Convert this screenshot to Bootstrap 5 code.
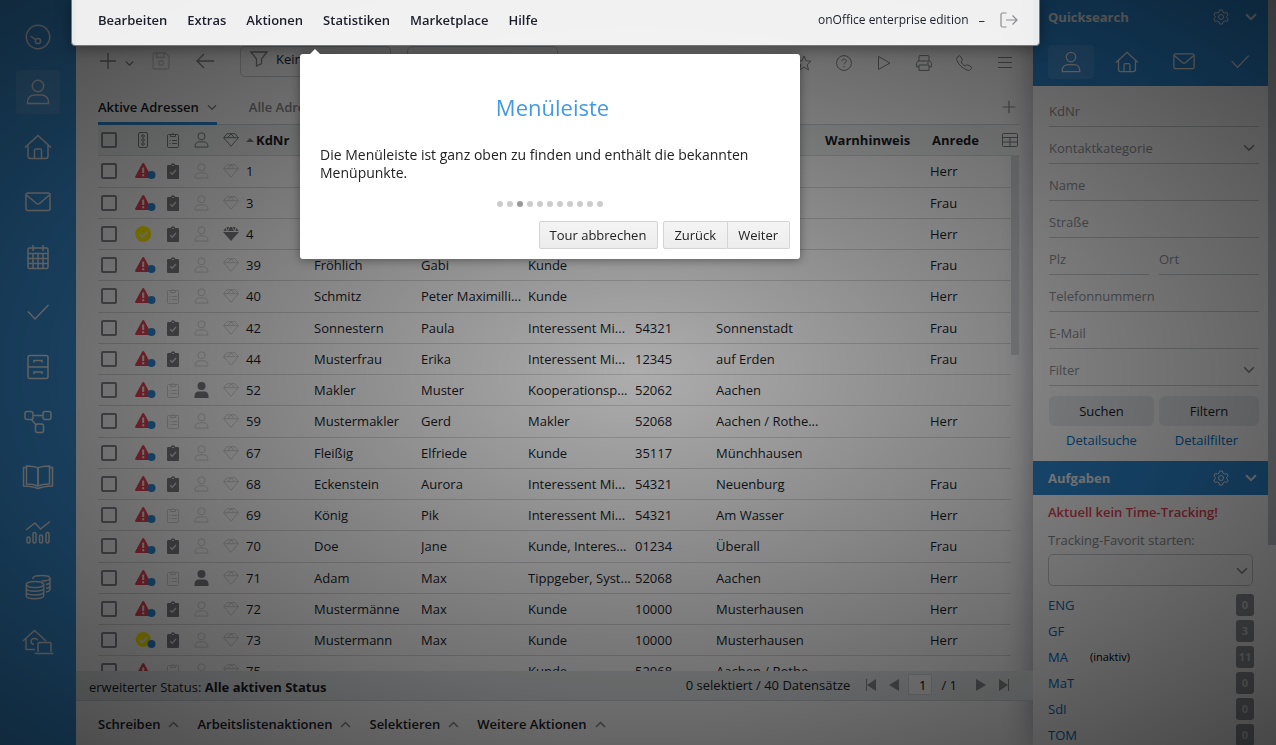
<!DOCTYPE html>
<html lang="de">
<head>
<meta charset="utf-8">
<meta name="viewport" content="width=device-width, initial-scale=1">
<title>onOffice enterprise edition</title>
<link href="https://cdn.jsdelivr.net/npm/bootstrap@5.3.0/dist/css/bootstrap.min.css" rel="stylesheet">
<style>
  body { font: 13px/18px "Open Sans", sans-serif; color: #1c1e2b; background: #fff; }
  svg { fill: none; stroke: currentColor; display: block; flex: none; }
  a { text-decoration: none; color: inherit; }
  button { border: 0; background: none; padding: 0; color: inherit; }
  .semi { font-weight: 600; }
  .greyish { color: #8b8c91; }
  .alarm { color: #e84357; }

  /* sidebar */
  .app-side { width: 76px; padding-top: 15px; gap: 11px; background: #3b94db; color: #eceef0; }
  .app-side a { width: 44px; height: 44px; border-radius: 4px; }
  .app-side a.current { background: #529fde; }

  /* menu bar, lifted over the backdrop */
  .menu-bar { height: 45px; padding: 0 15px 5px 22px; z-index: 1030; }
  .menu-bar::before { content: ""; position: absolute; inset: -4px -7px -1px -5px; z-index: -1; background: rgba(255,255,255,.91); border: 1px solid #777; border-radius: 4px; box-shadow: 0 2px 15px rgba(0,0,0,.4); }
  .menu-bar .edition { font-size: 12px; }
  .menu-bar .dash { margin: 0 15px 0 10px; }
  .backdrop { background: radial-gradient(ellipse farthest-corner at center, rgba(0,0,0,.4) 0, rgba(0,0,0,.9) 100%); opacity: .8; z-index: 1020; pointer-events: none; }

  .tools { height: 47px; padding: 1px 20px 16px 23px; color: #86888d; }
  .tools .faint { color: #d2d3d5; margin-left: 18px; }
  .tools .back { margin-left: 25px; }
  .filter-box { width: 151px; height: 31px; border: 1px solid #d0d2d5; border-radius: 5px; padding: 0 9px 4px; color: #1c1e2b; }
  .filter-box.first { margin-left: 25px; }
  .tabs-row { height: 33px; margin: 0 13px 0 22px; border-bottom: 1px solid #d0d4d8; }
  .tabs-row .tab { height: 33px; border-bottom: 3px solid transparent; }
  .tabs-row .tab.current { border-color: #2e8bd6; }

  /* address table */
  .grid-area { margin: 0 13px 0 22px; }
  .addr { table-layout: fixed; width: 100%; border-collapse: separate; border-spacing: 0; }
  .addr th { height: 31px; background: #f0f3f2; border-bottom: 1px solid #d6dadd; padding: 0; }
  .addr td { height: 31px; border-bottom: 1px solid #dadadc; padding: 0; white-space: nowrap; overflow: hidden; }
  .addr tbody tr:nth-child(4n+1) td { height: 32px; padding-bottom: 1px; }
  .addr td:last-child { border: 0; }
  .addr svg { margin: 0 auto; }
  .addr .off { color: #d4d4d6; }
  .addr .on { color: #7f7f85; }
  .addr input { appearance: none; display: block; width: 16px; height: 16px; margin: 0 0 0 3px; border: 2px solid #8a8893; border-radius: 2px; }
  .addr .sort { gap: 2px; }
  .addr th button { margin: 0 2px 0 auto; }
  .scroll-thumb { width: 8px; height: 199px; top: 31px; right: 1px; background: #d3d6da; }

  .status-strip { height: 30px; padding: 0 24px 2px 13px; background: #e8ecee; border-bottom: 1px solid #d4d8db; }
  .pager { gap: 13px; }
  .pager input { width: 24px; height: 21px; border: 1px solid #d4d9dc; background: #fafbfb; padding: 0 5px; text-align: right; margin: 0 -4px; }
  .pager .total { padding-right: 6px; }
  .action-strip { height: 44px; padding: 2px 22px 0; gap: 18px; }

  /* right panel */
  .right-panel { width: 235px; background: #fff; box-shadow: 0 0 30px rgba(30,30,60,.4); }
  .blue-head { background: #2e8bd6; color: #eceef0; height: 34px; padding: 0 11px 0 15px; }
  .blue-tabs { background: #2e8bd6; color: #eceef0; height: 52px; padding: 3px 5px 0 15px; }
  .blue-tabs a { width: 46px; height: 34px; border-radius: 4px; }
  .blue-tabs a.current { background: #4696da; }
  .quick { padding: 4px 9px 0 16px; }
  .field { width: 100%; height: 37px; border: 0; border-bottom: 1px solid #cfd0d2; border-radius: 0; background: none; padding: 5px 0 0; color: #929398; outline: 0; appearance: none; }
  .field::placeholder { color: #929398; opacity: 1; }
  .field-pair { gap: 10px; }
  .chev { right: 4px; top: 17px; pointer-events: none; }
  .fav-box { width: 205px; }
  .fav-box .chev { right: 5px; top: 13px; }
  .btn-pair { gap: 5px; margin-top: 10px; }
  .soft-btn { height: 30px; border-radius: 6px; background: #e9ecef; flex: 20 1 0; }
  .soft-btn.wide { flex-grow: 21; }
  .link-pair { padding: 5px 0 12px; }
  .blue-link { color: #0070c9; }
  .fav-label { margin: 10px 0 5px; }
  .fav { height: 32px; border: 1px solid #c6c9ce; border-radius: 5px; background: none; appearance: none; display: block; }
  .tasks { margin: 4px 14px 0 15px; }
  .tasks ul { padding-top: 6px; }
  .tasks li { height: 26px; }
  .tasks .note { font-size: 11px; margin-left: 22px; }
  .count { width: 18px; height: 22px; border-radius: 3px; background: #94979d; color: #d4d6d9; font-size: 11px; }
  .page-scroll { width: 8px; background: #fff; }
  .page-scroll div { height: 545px; background: #c6cad0; }

  /* tour step */
  .tour { left: 224px; top: 54px; width: 500px; padding: 37px 10px 10px; background: #fff; border-radius: 3px; box-shadow: 0 1px 10px rgba(0,0,0,.4); z-index: 1040; color: #222; }
  .tour::before { content: ""; position: absolute; left: 10px; top: -5px; border: 5px solid transparent; border-top: 0; border-bottom-color: #fff; }
  .tour h1 { font-size: 22px; line-height: 32px; color: #419be3; margin: 0 0 23px 5px; font-weight: 400; }
  .tour p { font-size: 14px; margin: 0 10px 19px; }
  .tour .dots { gap: 4px; margin-bottom: 14px; }
  .tour .dots i { width: 6px; height: 6px; border-radius: 50%; background: #ccc; }
  .tour .dots i.now { background: #999; }
  .tour button { height: 28px; border: 1px solid #d4d4d4; border-radius: 2px; padding: 0 11px 0 10px; background: linear-gradient(#f4f4f4, #ececec); }
  .tour .cancel { margin-right: 5px; }
</style>
</head>
<body>
<svg width="0" height="0" class="position-absolute" aria-hidden="true">
  <symbol id="person" viewBox="0 0 24 26"><circle cx="12" cy="7" r="5.7"/><path d="M1.5 24.5v-1.2c0-4.4 3-7.3 7-7.3h7c4 0 7 2.900 7 7.300v1.200z"/></symbol>
  <symbol id="home" viewBox="0 0 28 26"><path d="M1 13.500 14 1.500l13 12M4 11v11c0 1.500 1 2.500 2.500 2.500h15c1.500 0 2.500-1 2.500-2.500V11M10.500 24v-7.500c0-1 .5-1.500 1.500-1.500h4c1 0 1.500.5 1.500 1.500V24"/></symbol>
  <symbol id="mail" viewBox="0 0 26 20"><rect x="1" y="1" width="24" height="17.500" rx="2"/><path d="m1.500 3 10 8.500c1 .8 2 .8 3 0L24.500 3"/></symbol>
  <symbol id="check" viewBox="0 0 24 18"><path d="m2 8.500 7 7.500L22.500 2"/></symbol>
  <symbol id="gear" viewBox="0 0 16 16"><circle cx="8" cy="8" r="2.500"/><path d="M6.500 1h3l.5 2.200 1.600.9 2.100-.7 1.500 2.600L13.600 7.500v1l1.600 1.500-1.500 2.600-2.100-.7-1.600.9-.5 2.200h-3L6 12.800l-1.600-.9-2.100.7L.8 10l1.600-1.500v-1L.8 6l1.500-2.600 2.100.7L6 3.200z"/></symbol>
  <symbol id="down" viewBox="0 0 11 7"><path d="m1 1 4.500 4.500L10 1"/></symbol>
  <symbol id="up" viewBox="0 0 11 7"><path d="m1 6 4.500-4.500L10 6"/></symbol>
  <symbol id="plus" viewBox="0 0 18 18"><path d="M9 1v16M1 9h16"/></symbol>
  <symbol id="gem" viewBox="0 0 16 14"><path d="M4 .7h8l3.400 4L8 13.300.6 4.700zM.6 4.700h14.800M4.500 4.700 8 1l3.500 3.700"/></symbol>
  <symbol id="gem-full" viewBox="0 0 16 14"><path stroke="none" fill="currentColor" d="M3.500 0h2.700L4.500 3.800zM7 0h2l2 4H5zM9.800 0h2.700l-1 3.800zM2.800.8 3.500 4H.2zM13.200.8 15.800 4h-3.300zM0 5h16l-8 9z"/></symbol>
  <symbol id="clip" viewBox="0 0 12 16"><rect x=".5" y="2.500" width="11" height="13" rx="1"/><path d="M3.500 4.500v-2h1.300a1.300 1.300 0 0 1 2.400 0h1.300v2zM2.500 8.500h1M5 8.500h5M2.500 11.500h1M5 11.500h5"/></symbol>
  <symbol id="clip-full" viewBox="0 0 12 16"><path stroke="none" fill="currentColor" d="M1.500 2h2.200a2.400 2.400 0 0 1 4.600 0h2.200C11.500 2 12 2.500 12 3.500v11c0 1-.5 1.500-1.500 1.500h-9C.5 16 0 15.500 0 14.500v-11C0 2.500.5 2 1.500 2z"/><path stroke="#ddd" stroke-width="1.500" d="m3.200 9.200 2 2L9 7"/><path stroke="#ddd" d="M5 2.500h2"/></symbol>
  <symbol id="person-full" viewBox="0 0 14 16"><g stroke="none" fill="currentColor"><circle cx="7" cy="4" r="4"/><path d="M0 16v-2c0-3 2-4.500 4-4.500h6c2 0 4 1.500 4 4.500v2z"/></g></symbol>
  <symbol id="warn" viewBox="0 0 21 16"><path stroke="none" fill="#e84357" d="M7.300.6c.5-.8 1.400-.8 1.900 0L16 13.300c.4.900 0 1.700-1 1.700H1.300c-1 0-1.400-.8-1-1.700z"/><path stroke="#eee" stroke-width="2" d="M8.200 4.500V10M8.200 11.300v2"/><circle cx="16.500" cy="12" r="4" stroke="none" fill="#2e8bd6"/></symbol>
  <symbol id="okay" viewBox="0 0 21 16"><circle cx="8.200" cy="8" r="8" stroke="none" fill="#fff000"/><path stroke="#eee" stroke-width="2" d="m4.500 8.200 2.700 2.700L12 6"/></symbol>
  <symbol id="okay-dot" viewBox="0 0 21 16"><circle cx="8.200" cy="7.500" r="7.500" stroke="none" fill="#fff000"/><path stroke="#eee" stroke-width="2" d="m4.500 7.700 2.700 2.700L12 5.500"/><circle cx="16.500" cy="12" r="4" stroke="none" fill="#2e8bd6"/></symbol>
</svg>

<div class="vh-100 d-flex overflow-hidden">
  <nav class="app-side d-flex flex-column align-items-center flex-shrink-0" aria-label="Module">
    <a href="#" class="d-grid"><svg class="m-auto" width="26" height="26" viewBox="0 0 26 26" stroke-width="1.500"><circle cx="13" cy="13" r="11.700"/><circle cx="13" cy="17" r="2.600"/><path d="m5.500 12 5.200 3.700"/></svg></a>
    <a href="#" class="d-grid current"><svg class="m-auto" width="24" height="26" stroke-width="1.500"><use href="#person"/></svg></a>
    <a href="#" class="d-grid"><svg class="m-auto" width="28" height="26" stroke-width="1.500"><use href="#home"/></svg></a>
    <a href="#" class="d-grid"><svg class="m-auto" width="26" height="20" stroke-width="1.500"><use href="#mail"/></svg></a>
    <a href="#" class="d-grid"><svg class="m-auto" width="24" height="26" viewBox="0 0 24 26" stroke-width="1.500"><rect x="2" y="4" width="20" height="20.500" rx="1.500"/><path d="M2 9.500h20M2 14.500h20M2 19.500h20M7 9.500v15M12 9.500v15M17 9.500v15M7 1v6M17 1v6"/></svg></a>
    <a href="#" class="d-grid"><svg class="m-auto" width="24" height="18" stroke-width="1.500"><use href="#check"/></svg></a>
    <a href="#" class="d-grid"><svg class="m-auto" width="24" height="26" viewBox="0 0 24 26" stroke-width="1.500"><rect x="2" y="1.500" width="20" height="23" rx="2"/><path d="M2 13h20M8 8.500V6.500h8v2M8 20v-2h8v2"/></svg></a>
    <a href="#" class="d-grid"><svg class="m-auto" width="28" height="24" viewBox="0 0 28 24" stroke-width="1.500"><rect x="1" y="1.500" width="8" height="8" rx="2"/><rect x="19" y="1.500" width="8" height="8" rx="2"/><rect x="11.500" y="14" width="8" height="8.500" rx="2"/><path d="M9 5.500h10M7.500 9.500l5 6"/></svg></a>
    <a href="#" class="d-grid"><svg class="m-auto" width="32" height="26" viewBox="0 0 32 26" stroke-width="1.500"><path d="M16 4C12 2 8 2 4.500 2v18c4 0 8 .5 11.500 2 3.500-1.500 7.500-2 11.500-2V2C24 2 20 2 16 4zV22M4.500 3.500H1.500V22c5 .3 9 .5 14.500 2.500 5.500-2 9.500-2.200 14.500-2.500V3.500H27.500"/><path d="M16 4v18"/></svg></a>
    <a href="#" class="d-grid"><svg class="m-auto" width="26" height="24" viewBox="0 0 26 24" stroke-width="1.500"><path d="m1 10 9-7 5.500 6L25 1.500"/><rect x="2" y="17" width="3" height="6" rx="1.500"/><rect x="8" y="12.500" width="3" height="10.500" rx="1.500"/><rect x="14.500" y="15" width="3" height="8" rx="1.500"/><rect x="21" y="12.500" width="3" height="10.500" rx="1.500"/></svg></a>
    <a href="#" class="d-grid"><svg class="m-auto" width="26" height="26" viewBox="0 0 26 26" stroke-width="1.500"><ellipse cx="10" cy="10.500" rx="8.700" ry="3"/><path d="M1.300 10.500V22c0 3.500 17.400 3.500 17.400 0V10.500M1.300 14.500c0 3.500 17.400 3.500 17.400 0M1.300 18.300c0 3.500 17.400 3.500 17.400 0M8 5V4c0-3.500 17-3.500 17 0v11.500c0 1.200-1.500 2-4 2.500M25 4c0 2-4 3-8.500 3M25 8c0 1.200-1.500 2-4 2.500M25 12c0 1.200-1.500 2-4 2.500"/></svg></a>
    <a href="#" class="d-grid"><svg class="m-auto" width="32" height="26" viewBox="0 0 32 26" stroke-width="1.500"><path d="M1 12 12.500 1.500 24 12M4 10v10.500h9M12 15.500c-4-.5-4-6 .5-6 2 0 3 1 3 2M16 23v-8c0-1 .5-1.500 1.500-1.500h10c1 0 1.500.5 1.500 1.500v8M13 24.500h18.500"/></svg></a>
  </nav>

  <main class="flex-grow-1 d-flex flex-column position-relative">
    <header class="menu-bar d-flex align-items-center position-relative flex-shrink-0">
      <nav class="d-flex semi" aria-label="Menü"><a class="me-3 pe-1" href="#">Bearbeiten</a><a class="me-3 pe-1" href="#">Extras</a><a class="me-3 pe-1" href="#">Aktionen</a><a class="me-3 pe-1" href="#">Statistiken</a><a class="me-3 pe-1" href="#">Marketplace</a><a href="#">Hilfe</a></nav>
      <span class="edition ms-auto">onOffice enterprise edition</span><span class="dash">–</span>
      <button class="greyish" aria-label="Abmelden"><svg width="18" height="16" viewBox="0 0 18 16" stroke-width="1.200"><path d="M6.500 1h-4C1.500 1 1 1.500 1 2.500v11c0 1 .5 1.500 1.500 1.500h4M6 8h11M12.500 3.500 17 8l-4.500 4.500"/></svg></button>
    </header>

    <div class="tools d-flex align-items-center">
      <button aria-label="Neu"><svg width="18" height="18" stroke-width="1.300"><use href="#plus"/></svg></button>
      <button class="ms-2 pt-1" aria-label="Mehr"><svg width="9" height="7" stroke-width="1.500"><use href="#down"/></svg></button>
      <button class="faint" aria-label="Speichern"><svg width="18" height="18" viewBox="0 0 18 18" stroke-width="1.300"><path d="M1 2.500C1 1.500 1.500 1 2.500 1h11L17 4.500v11c0 1-.5 1.500-1.500 1.500h-13C1.500 17 1 16.500 1 15.500zM4.500 1v4.500H12V1"/><circle cx="9" cy="11" r="2.300"/></svg></button>
      <button class="back" aria-label="Zurück"><svg width="20" height="16" viewBox="0 0 20 16" stroke-width="1.300"><path d="M19 8H2M9 1 2 8l7 7"/></svg></button>
      <div class="filter-box first d-flex align-items-center gap-2"><svg class="greyish" width="18" height="16" viewBox="0 0 18 16" stroke-width="1.300"><path d="M1 1h16l-5.500 7v4.500L6.500 15V8z"/></svg><span>Kein</span></div>
      <div class="filter-box ms-3"></div>
      <div class="d-flex align-items-center ms-auto gap-4 pt-1">
        <button aria-label="Favorit"><svg width="16" height="16" viewBox="0 0 16 16"><path d="m8 1 2 4.800 5 .4-3.800 3.400L12.500 15 8 12l-4.500 3 1.300-5.400L1 6.200l5-.4z"/></svg></button>
        <button aria-label="Hilfe"><svg width="16" height="16" viewBox="0 0 16 16"><circle cx="8" cy="8" r="7.400"/><path d="M5.800 6.300c0-3 4.500-2.700 4.500-.2C10.300 7.700 8 7.700 8 9.300M8 11v1.300"/></svg></button>
        <button aria-label="Abspielen"><svg width="16" height="16" viewBox="0 0 16 16"><path d="M2.500 1.500v13L14 8z"/></svg></button>
        <button aria-label="Drucken"><svg width="16" height="16" viewBox="0 0 16 16"><path d="M3 6V1.500C3 1 3.300.6 4 .6h8c.7 0 1 .4 1 .9V6M3 12H.6V8.500C.6 7 1.500 6 3 6h10c1.500 0 2.400 1 2.400 2.500V12H13M3 10h10v5.400H3zM11 8h2"/></svg></button>
        <button aria-label="Telefon"><svg width="17" height="16" viewBox="0 0 17 16"><path d="M1 2.500 3 .9c.6-.4 1-.2 1.300.3l2 3c.3.500.2 1-.3 1.400l-1 .9c.6 2 2.200 3.600 4.300 4.500l1-1c.5-.4.900-.5 1.400-.1l3.600 2c.5.300.7.800.3 1.300l-1.300 1.700c-.8.800-2 .6-3.300.1C6 13 2.500 9.500 1 5.500.6 4.300.4 3.300 1 2.500z"/></svg></button>
        <button aria-label="Menü"><svg width="16" height="16" viewBox="0 0 16 16"><path d="M1 2.500h14M1 7.500h14M1 12.500h14"/></svg></button>
      </div>
    </div>

    <div class="tabs-row d-flex align-items-start semi">
      <a href="#" class="tab current d-flex align-items-center gap-2">Aktive Adressen <svg class="greyish" width="10" height="7" stroke-width="1.500"><use href="#down"/></svg></a>
      <a href="#" class="tab d-flex align-items-center ms-3 ps-3 greyish">Alle Adressen</a>
      <button class="ms-auto mt-2 pe-1 greyish" aria-label="Tab hinzufügen"><svg width="14" height="14" stroke-width="1.500"><use href="#plus"/></svg></button>
    </div>

    <div class="grid-area flex-grow-1 overflow-hidden position-relative">
      <table class="addr">
        <colgroup><col width="30"><col width="30"><col width="29"><col width="29"><col width="30"><col width="68"><col width="107"><col width="107"><col width="107"><col width="81"><col width="107"><col width="107"><col><col width="9"></colgroup>
        <thead><tr>
          <th><input type="checkbox" aria-label="Alle"></th>
          <th><svg class="on" width="10" height="16" viewBox="0 0 10 16"><rect x=".5" y=".5" width="9" height="15" rx="1.500"/><circle cx="5" cy="4" r="1.300"/><circle cx="5" cy="8" r="1.300"/><circle cx="5" cy="12" r="1.300"/></svg></th>
          <th><svg class="on" width="12" height="16"><use href="#clip"/></svg></th>
          <th><svg class="on" width="15" height="16" stroke-width="1.600"><use href="#person"/></svg></th>
          <th><svg class="on" width="16" height="14"><use href="#gem"/></svg></th>
          <th><span class="sort d-flex align-items-center"><svg class="m-0 on" width="8" height="4" viewBox="0 0 8 4"><path fill="currentColor" stroke="none" d="M4 0l4 4H0z"/></svg>KdNr</span></th>
          <th></th><th></th><th></th><th></th><th></th><th><span class="sort d-flex"><span></span>Warnhinweis</span></th>
          <th colspan="2"><span class="sort d-flex align-items-center"><span></span>Anrede <button class="on" aria-label="Spalten"><svg width="16" height="14" viewBox="0 0 16 14"><rect x=".5" y=".5" width="15" height="13" rx="1"/><path d="M.5 4.500h15M.5 9h15M8 4.500v9"/></svg></button></span></th>
        </tr></thead>
        <tbody id="rows"></tbody>
      </table>
      <div class="scroll-thumb position-absolute"></div>
    </div>

    <div class="status-strip d-flex align-items-center flex-shrink-0">
      <span class="pt-1">erweiterter Status: <b>Alle aktiven Status</b></span>
      <span class="ms-auto me-3">0 selektiert / 40 Datensätze</span>
      <div class="pager d-flex align-items-center">
        <button class="greyish" aria-label="Erste"><svg width="10" height="12" viewBox="0 0 10 12"><path fill="currentColor" stroke="none" d="M0 0h1v12H0zM10 0v12L1 6z"/></svg></button>
        <button class="greyish" aria-label="Vorige"><svg width="10" height="12" viewBox="0 0 10 12"><path fill="currentColor" stroke="none" d="M10 0v12L0 6z"/></svg></button>
        <input type="text" value="1" aria-label="Seite"><span class="total">/ 1</span>
        <button class="greyish" aria-label="Nächste"><svg width="10" height="12" viewBox="0 0 10 12"><path fill="currentColor" stroke="none" d="M0 0v12l10-6z"/></svg></button>
        <button class="greyish" aria-label="Letzte"><svg width="10" height="12" viewBox="0 0 10 12"><path fill="currentColor" stroke="none" d="M9 0h1v12H9zM0 0v12l9-6z"/></svg></button>
      </div>
    </div>
    <div class="action-strip d-flex align-items-center semi flex-shrink-0">
      <button class="semi d-flex align-items-center gap-2">Schreiben <svg class="greyish" width="11" height="7" stroke-width="1.500"><use href="#up"/></svg></button>
      <button class="semi d-flex align-items-center gap-2">Arbeitslistenaktionen <svg class="greyish" width="11" height="7" stroke-width="1.500"><use href="#up"/></svg></button>
      <button class="semi d-flex align-items-center gap-2">Selektieren <svg class="greyish" width="11" height="7" stroke-width="1.500"><use href="#up"/></svg></button>
      <button class="semi d-flex align-items-center gap-2">Weitere Aktionen <svg class="greyish" width="11" height="7" stroke-width="1.500"><use href="#up"/></svg></button>
    </div>

    <section class="tour position-absolute" role="dialog" aria-labelledby="tour-title">
      <h1 class="text-center" id="tour-title">Menüleiste</h1>
      <p>Die Menüleiste ist ganz oben zu finden und enthält die bekannten Menüpunkte.</p>
      <div class="dots d-flex justify-content-center"><i></i><i></i><i class="now"></i><i></i><i></i><i></i><i></i><i></i><i></i><i></i><i></i></div>
      <div class="d-flex justify-content-end"><button class="cancel">Tour abbrechen</button><button class="rounded-end-0">Zurück</button><button class="rounded-start-0 border-start-0">Weiter</button></div>
    </section>
  </main>

  <aside class="right-panel flex-shrink-0">
    <div class="blue-head d-flex align-items-center fw-bold">Quicksearch <svg class="ms-auto me-3" width="16" height="16"><use href="#gear"/></svg><svg width="12" height="8" stroke-width="1.800"><use href="#down"/></svg></div>
    <nav class="blue-tabs d-flex align-items-center justify-content-between" aria-label="Suche">
      <a href="#" class="current d-grid"><svg class="m-auto" width="20" height="22" stroke-width="1.500"><use href="#person"/></svg></a>
      <a href="#" class="d-grid"><svg class="m-auto" width="24" height="22" stroke-width="1.500"><use href="#home"/></svg></a>
      <a href="#" class="d-grid"><svg class="m-auto" width="22" height="17" stroke-width="1.500"><use href="#mail"/></svg></a>
      <a href="#" class="d-grid"><svg class="m-auto" width="20" height="15" stroke-width="1.500"><use href="#check"/></svg></a>
    </nav>
    <form class="quick">
      <input class="field d-block" placeholder="KdNr" aria-label="KdNr">
      <div class="position-relative"><select class="field d-block" aria-label="Kontaktkategorie"><option>Kontaktkategorie</option></select><svg class="chev position-absolute greyish" width="12" height="8" stroke-width="1.500"><use href="#down"/></svg></div>
      <input class="field d-block" placeholder="Name" aria-label="Name">
      <input class="field d-block" placeholder="Straße" aria-label="Straße">
      <div class="field-pair d-flex"><input class="field" placeholder="Plz" aria-label="Plz"><input class="field" placeholder="Ort" aria-label="Ort"></div>
      <input class="field d-block" placeholder="Telefonnummern" aria-label="Telefonnummern">
      <input class="field d-block" placeholder="E-Mail" aria-label="E-Mail">
      <div class="position-relative"><select class="field d-block" aria-label="Filter"><option>Filter</option></select><svg class="chev position-absolute greyish" width="12" height="8" stroke-width="1.500"><use href="#down"/></svg></div>
      <div class="btn-pair d-flex"><button type="button" class="soft-btn wide">Suchen</button><button type="button" class="soft-btn">Filtern</button></div>
      <div class="link-pair d-flex text-center blue-link"><a href="#" class="w-50">Detailsuche</a><a href="#" class="w-50">Detailfilter</a></div>
    </form>
    <div class="blue-head d-flex align-items-center fw-bold">Aufgaben <svg class="ms-auto me-3" width="16" height="16"><use href="#gear"/></svg><svg width="12" height="8" stroke-width="1.800"><use href="#down"/></svg></div>
    <div class="tasks">
      <div class="semi pt-1 alarm">Aktuell kein Time-Tracking!</div>
      <label for="fav" class="fav-label d-block greyish">Tracking-Favorit starten:</label>
      <div class="fav-box position-relative"><select id="fav" class="fav w-100"></select><svg class="chev position-absolute greyish" width="12" height="8" stroke-width="1.500"><use href="#down"/></svg></div>
      <ul class="list-unstyled m-0 blue-link" id="tasks"></ul>
    </div>
  </aside>
  <div class="page-scroll flex-shrink-0"><div></div></div>
</div>
<div class="backdrop position-fixed top-0 bottom-0 start-0 end-0"></div>

<script src="https://cdn.jsdelivr.net/npm/bootstrap@5.3.0/dist/js/bootstrap.bundle.min.js"></script>
<script>
  // status icon, has clipboard, is partner, is premium, then the text columns
  const rows = [
    ['warn',1,0,0,'1','','','','','','Herr'],
    ['warn',1,0,0,'3','','','','','','Frau'],
    ['okay',1,0,1,'4','','','','','','Herr'],
    ['warn',1,0,0,'39','Fröhlich','Gabi','Kunde','','','Frau'],
    ['warn',0,0,0,'40','Schmitz','Peter Maximilli...','Kunde','','','Herr'],
    ['warn',1,0,0,'42','Sonnestern','Paula','Interessent Mi...','54321','Sonnenstadt','Frau'],
    ['warn',1,0,0,'44','Musterfrau','Erika','Interessent Mi...','12345','auf Erden','Frau'],
    ['warn',0,1,0,'52','Makler','Muster','Kooperationsp...','52062','Aachen',''],
    ['warn',0,0,0,'59','Mustermakler','Gerd','Makler','52068','Aachen / Rothe...','Herr'],
    ['warn',1,0,0,'67','Fleißig','Elfriede','Kunde','35117','Münchhausen',''],
    ['warn',1,0,0,'68','Eckenstein','Aurora','Interessent Mi...','54321','Neuenburg','Frau'],
    ['warn',0,0,0,'69','König','Pik','Interessent Mi...','54321','Am Wasser','Herr'],
    ['warn',1,0,0,'70','Doe','Jane','Kunde, Interes...','01234','Überall','Frau'],
    ['warn',0,1,0,'71','Adam','Max','Tippgeber, Syst...','52068','Aachen','Herr'],
    ['warn',1,0,0,'72','Mustermänne','Max','Kunde','10000','Musterhausen','Herr'],
    ['okay-dot',1,0,0,'73','Mustermann','Max','Kunde','10000','Musterhausen','Herr'],
    ['warn',0,0,0,'75','','','Kunde','52068','Aachen / Rothe...','']
  ];
  const icon = (name, on, w, h, sw, cls) => `<td class="${cls || ''}"><svg class="${on ? 'on' : 'off'}" width="${w}" height="${h}" stroke-width="${sw || 1}"><use href="#${name}"/></svg></td>`;
  document.getElementById('rows').innerHTML = rows.map(r =>
    `<tr><td><input type="checkbox" aria-label="Auswählen ${r[4]}"></td>` +
    icon(r[0], 1, 21, 16, 1, 'ps-1') +
    icon(r[1] ? 'clip-full' : 'clip', r[1], 12, 16) +
    icon(r[2] ? 'person-full' : 'person', r[2], 15, 16, 1.5) +
    icon(r[3] ? 'gem-full' : 'gem', r[3], 16, 14) +
    r.slice(4, 10).map(t => `<td>${t}</td>`).join('') + `<td></td><td>${r[10]}</td><td></td></tr>`).join('');
  document.getElementById('tasks').innerHTML = [['ENG',0],['GF',3],['MA',11],['MaT',0],['SdI',0],['TOM',0]].map(([n, c]) =>
    `<li class="d-flex align-items-center"><a href="#">${n}</a>${n === 'MA' ? '<span class="note text-black">(inaktiv)</span>' : ''}<span class="count d-grid ms-auto fw-bold text-center align-items-center">${c}</span></li>`).join('');
</script>
</body>
</html>
